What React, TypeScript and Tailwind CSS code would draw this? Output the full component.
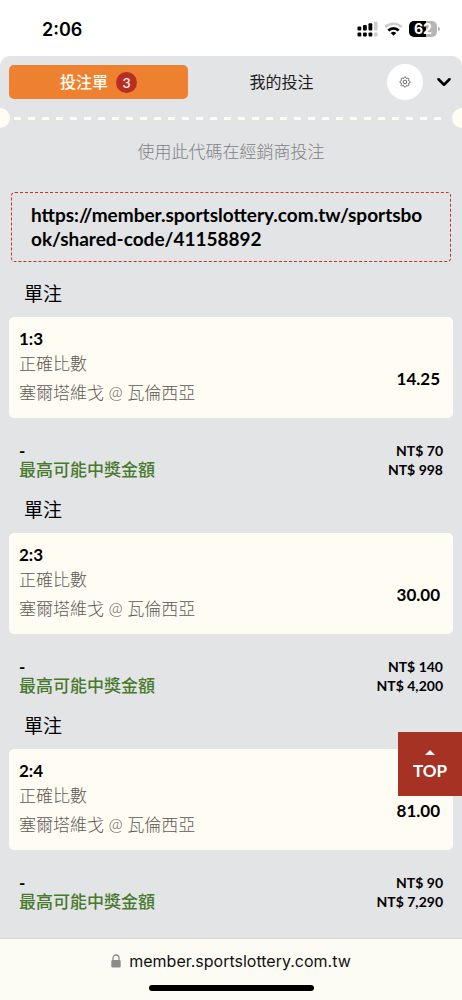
import { ChevronDown } from 'lucide-react'

interface Bet {
  score: string
  odds: string
  stake: string
  payout: string
}

const BETS: Bet[] = [
  { score: '1:3', odds: '14.25', stake: 'NT$ 70', payout: 'NT$ 998' },
  { score: '2:3', odds: '30.00', stake: 'NT$ 140', payout: 'NT$ 4,200' },
  { score: '2:4', odds: '81.00', stake: 'NT$ 90', payout: 'NT$ 7,290' },
]

/** Dual-SIM signal: four bars over a row of dots, the last column faded. */
function SignalIcon() {
  return (
    <svg width="21" height="16" viewBox="0 0 21 16" aria-hidden="true">
      <g fill="#000">
        <rect x="0.5" y="5.5" width="3.8" height="4" rx="0.9" />
        <rect x="6" y="4" width="3.8" height="5.5" rx="0.9" />
        <rect x="11.5" y="2.3" width="3.8" height="7.2" rx="0.9" />
        <rect x="0.5" y="11.6" width="3.8" height="3.8" rx="1" />
        <rect x="6" y="11.6" width="3.8" height="3.8" rx="1" />
        <rect x="11.5" y="11.6" width="3.8" height="3.8" rx="1" />
      </g>
      <g fill="#cdcdcd">
        <rect x="17" y="0.8" width="3.6" height="8.7" rx="0.9" />
        <rect x="17" y="11.6" width="3.6" height="3.8" rx="1" />
      </g>
    </svg>
  )
}

function WifiIcon() {
  return (
    <svg width="19" height="14" viewBox="0 0 19 14" fill="none" aria-hidden="true">
      <path d="M1.2 5.2a11.8 11.8 0 0 1 16.6 0" stroke="#cdcdcd" strokeWidth="2.6" />
      <path d="M4.3 8.5a7.4 7.4 0 0 1 10.4 0" stroke="#000" strokeWidth="2.7" />
      <path d="M6.7 11a4 4 0 0 1 5.6 0L9.5 13.8z" fill="#000" />
    </svg>
  )
}

function BatteryIcon() {
  return (
    <div className="flex items-center gap-px">
      <span className="flex h-4 w-7 items-center justify-center rounded-[5px] bg-[linear-gradient(90deg,#000_62%,#b5b5b5_62%)] font-[Inter] text-[14px] leading-4 font-bold text-white">
        62
      </span>
      <span className="h-1 w-0.5 rounded-r-full bg-[#b5b5b5]" />
    </div>
  )
}

function GearIcon() {
  return (
    <svg width="12" height="12" viewBox="0 0 24 24" fill="none" stroke="#555" strokeWidth="1.5" strokeLinejoin="round" aria-hidden="true">
      <path d="M9.9 4.5 10.5 2h3l.6 2.5 1.8.8 2.2-1.4 2.1 2.1-1.4 2.2.8 1.8 2.4.5v3l-2.4.6-.8 1.8 1.4 2.2-2.1 2.1-2.2-1.4-1.8.8-.6 2.4h-3l-.6-2.4-1.8-.8-2.2 1.4-2.1-2.1 1.4-2.2-.8-1.8L2 13.5v-3l2.4-.5.8-1.8L3.8 6l2.1-2.1 2.2 1.4z" />
      <circle cx="12" cy="12" r="3.6" strokeWidth="1.8" />
    </svg>
  )
}

function LockIcon() {
  return (
    <svg width="10" height="14" viewBox="0 0 10 14" aria-hidden="true">
      <path d="M2 7V4a3 3 0 0 1 6 0v3" fill="none" stroke="#8b8b8a" strokeWidth="1.3" />
      <rect x="0.3" y="6" width="9.4" height="7.6" rx="1.4" fill="#8b8b8a" />
    </svg>
  )
}

function StatusBar() {
  return (
    <div className="flex h-14 items-center justify-between bg-white pt-1 pr-[22px] pl-[42px]">
      <span className="font-[Inter] text-lg font-semibold">2:06</span>
      <div className="flex items-center gap-1.5 pb-0.5">
        <SignalIcon />
        <WifiIcon />
        <BatteryIcon />
      </div>
    </div>
  )
}

function SlipTabs() {
  return (
    <div className="flex items-center px-[9px] py-2">
      <div className="grid flex-1 grid-cols-2 gap-1">
        <button
          type="button"
          className="flex h-[34px] items-center justify-center gap-2 rounded-[5px] bg-[#ee8130] text-[16px] font-medium text-[#fffcf3]"
        >
          投注單
          <span className="flex size-[21px] items-center justify-center rounded-full bg-[#b92e22] text-[14px] font-medium">
            3
          </span>
        </button>
        <button type="button" className="h-[34px] text-[16px] text-[#1c1c1c]">
          我的投注
        </button>
      </div>
      <button type="button" aria-label="設定" className="ml-4 flex size-9 items-center justify-center rounded-full bg-white">
        <GearIcon />
      </button>
      <button type="button" aria-label="收合" className="ml-3 flex h-9 w-[18px] items-center justify-center">
        <ChevronDown size={22} strokeWidth={2.8} className="shrink-0" />
      </button>
    </div>
  )
}

/** Ticket-style perforation with a notch at each edge. */
function Perforation() {
  return (
    <div className="flex h-5 items-center overflow-hidden">
      <span className="h-5 w-[10px] rounded-r-full bg-[#fffcf3]" />
      <span className="mx-1 h-[3px] flex-1 bg-[linear-gradient(90deg,#fffcf3_50%,transparent_50%)] bg-[length:14px_3px] bg-repeat-round" />
      <span className="h-5 w-[10px] rounded-l-full bg-[#fffcf3]" />
    </div>
  )
}

function BetSection({ bet }: { bet: Bet }) {
  return (
    <section>
      <h2 className="mb-2.5 px-6 text-[19px] leading-[27px]">單注</h2>
      <div className="mx-[9px] rounded-[5px] bg-[#fffcf3] pt-2.5 pr-[13px] pb-[13px] pl-[10px]">
        <h3 className="text-[17px] leading-6 font-bold">{bet.score}</h3>
        <div className="flex items-center justify-between">
          <div className="flex flex-col gap-1 text-[17px] leading-[25px] font-light text-[#5c5a56]">
            <p>正確比數</p>
            <p>塞爾塔維戈 @ 瓦倫西亞</p>
          </div>
          <span className="pt-0.5 text-[17px] font-bold">{bet.odds}</span>
        </div>
      </div>
      <dl className="mt-[23px] grid grid-cols-[1fr_auto] px-[19px] leading-[19px] font-bold">
        <dt className="text-[17px]">-</dt>
        <dd className="text-right text-[14px]">{bet.stake}</dd>
        <dt className="text-[17px] font-medium text-[#477a2c]">最高可能中獎金額</dt>
        <dd className="text-right text-[14px]">{bet.payout}</dd>
      </dl>
    </section>
  )
}

export default function App() {
  return (
    <div className="flex min-h-screen flex-col bg-[#fffcf3] font-[Lato,'Noto_Sans_CJK_TC',sans-serif] text-black">
      <StatusBar />
      <main className="flex-1 rounded-t-[10px] bg-[#e3e4e6] pb-6">
        <SlipTabs />
        <Perforation />
        <p className="mt-3 text-center text-[17px] leading-6 font-light text-[#808184]">使用此代碼在經銷商投注</p>
        <p className="mx-[11px] mt-7 rounded-[4px] border border-dashed border-[#c4312b] px-[19px] py-2.5 text-[19px] leading-6 font-bold break-all">
          https://member.sportslottery.com.tw/sportsbook/shared-code/41158892
        </p>
        <div className="mt-[18px] flex flex-col gap-[17px]">
          {BETS.map((bet) => (
            <BetSection key={bet.score} bet={bet} />
          ))}
        </div>
      </main>

      <button
        type="button"
        className="fixed right-0 bottom-[204px] flex size-16 flex-col items-center justify-center gap-1 bg-[#a63224] pt-1 text-[17px] leading-6 font-bold text-white"
      >
        <svg width="10" height="5" viewBox="0 0 10 5" fill="#fff" aria-hidden="true">
          <path d="M5 0 10 5H0z" />
        </svg>
        TOP
      </button>

      <footer className="sticky bottom-0 flex h-[62px] flex-col items-center justify-between border-t border-[#d9d9da] bg-[#fcfbf4] pt-2.5 pb-[9px]">
        <div className="flex items-center gap-2 font-[Inter] text-[16px] leading-6 text-[#111]">
          <LockIcon />
          member.sportslottery.com.tw
        </div>
        <span className="h-1.5 w-[165px] rounded-full bg-black" />
      </footer>
    </div>
  )
}
